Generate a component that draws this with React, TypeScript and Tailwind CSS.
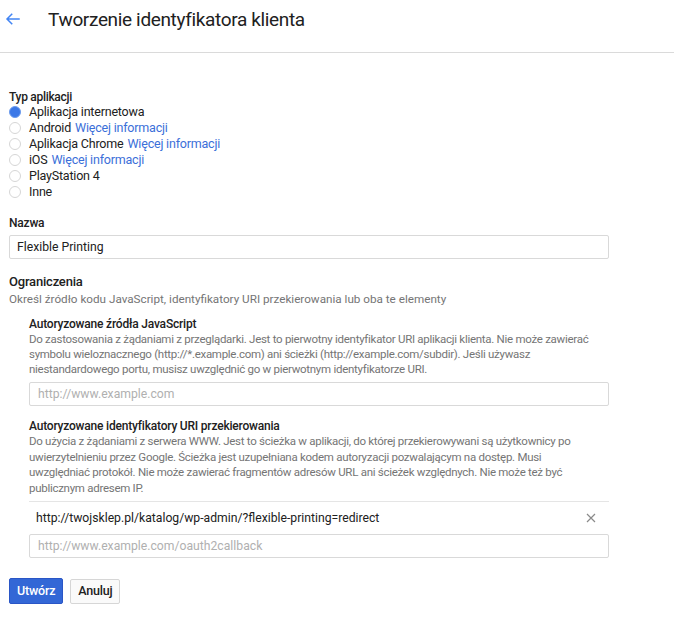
import React from 'react';

const radios = [
  { label: 'Aplikacja internetowa', more: false, checked: true },
  { label: 'Android', more: true },
  { label: 'Aplikacja Chrome', more: true },
  { label: 'iOS', more: true },
  { label: 'PlayStation 4', more: false },
  { label: 'Inne', more: false },
];

export default function App() {
  return (
    <div className="min-h-screen bg-white text-[#212121] font-['Roboto','Liberation_Sans',sans-serif]">
      {/* Header */}
      <div className="h-[53px] border-b border-[#dadada] flex items-center">
        <button className="w-[48px] h-[40px] flex items-center pl-[4px] -mt-[14px]">
          <svg width="18" height="18" viewBox="0 0 24 24" fill="none">
            <path d="M21 12H4M11 5l-7 7 7 7" stroke="#4285f4" strokeWidth="2" />
          </svg>
        </button>
        <h1 className="text-[19px] leading-[26px] tracking-[-0.35px] -mt-[13px] text-[#212121]">
          Tworzenie identyfikatora klienta
        </h1>
      </div>

      <div className="pl-[9px] pr-[65px]">
        {/* Typ aplikacji */}
        <div className="mt-[37px] text-[12px] leading-[14px] font-medium tracking-[-0.3px]">Typ aplikacji</div>
        <div className="flex flex-col">
          {radios.map((r) => (
            <label key={r.label} className="flex items-center h-[16px] text-[12.5px] tracking-[-0.2px]">
              {r.checked ? (
                <span className="w-[12px] h-[12px] rounded-full bg-[#3b78e7] border border-[#6d9ced] mr-[8px]" />
              ) : (
                <span className="w-[12px] h-[12px] rounded-full border border-[#d6d6d6] bg-white mr-[8px]" />
              )}
              <span>{r.label}</span>
              {r.more && <a className="ml-[4px] text-[#3b6fd9]">Więcej informacji</a>}
            </label>
          ))}
        </div>

        {/* Nazwa */}
        <div className="mt-[15px] text-[12px] leading-[16px] font-medium tracking-[-0.2px]">Nazwa</div>
        <div className="mt-[4px] h-[24px] border border-[#d9d9d9] rounded-[2px] flex items-center px-[7px] text-[12.2px]">
          Flexible Printing
        </div>

        {/* Ograniczenia */}
        <div className="mt-[14px] text-[13px] leading-[18px] font-medium tracking-[-0.2px]">Ograniczenia</div>
        <div className="text-[11.7px] leading-[16px] text-[#757575]">
          Określ źródło kodu JavaScript, identyfikatory URI przekierowania lub oba te elementy
        </div>

        <div className="pl-[20px]">
          <div className="mt-[9px] text-[12px] leading-[16px] font-medium tracking-[-0.2px]">
            Autoryzowane źródła JavaScript
          </div>
          <p className="text-[11.5px] leading-[15px] tracking-[-0.28px] text-[#757575] pr-[9px]">
            Do zastosowania z żądaniami z przeglądarki. Jest to pierwotny identyfikator URI aplikacji klienta. Nie może zawierać symbolu wieloznacznego (http://*.example.com) ani ścieżki (http://example.com/subdir). Jeśli używasz niestandardowego portu, musisz uwzględnić go w pierwotnym identyfikatorze URI.
          </p>
          <div className="mt-[5px] h-[24px] border border-[#d9d9d9] rounded-[2px] flex items-center px-[8px] text-[12.2px] text-[#b0b0b0]">
            http://www.example.com
          </div>

          <div className="mt-[12px] text-[12px] leading-[16px] font-medium tracking-[-0.2px]">
            Autoryzowane identyfikatory URI przekierowania
          </div>
          <p className="text-[11.5px] leading-[15.5px] tracking-[-0.28px] text-[#757575] pr-[9px]">
            Do użycia z żądaniami z serwera WWW. Jest to ścieżka w aplikacji, do której przekierowywani są użytkownicy po uwierzytelnieniu przez Google. Ścieżka jest uzupełniana kodem autoryzacji pozwalającym na dostęp. Musi uwzględniać protokół. Nie może zawierać fragmentów adresów URL ani ścieżek względnych. Nie może też być publicznym adresem IP.
          </p>
          <div className="mt-[5px] border-t border-[#e5e5e5] h-[33px] flex items-center justify-between pl-[7px] pr-[13px] text-[12.2px]">
            <span>http://twojsklep.pl/katalog/wp-admin/?flexible-printing=redirect</span>
            <svg width="10" height="10" viewBox="0 0 10 10">
              <path d="M1 1l8 8M9 1l-8 8" stroke="#8a8a8a" strokeWidth="1.2" />
            </svg>
          </div>
          <div className="h-[24px] border border-[#d9d9d9] rounded-[2px] flex items-center px-[8px] text-[12.2px] text-[#b0b0b0]">
            http://www.example.com/oauth2callback
          </div>
        </div>

        {/* Buttons */}
        <div className="mt-[20px] flex items-center gap-[7px]">
          <button className="h-[26px] px-[7px] rounded-[2px] bg-[#3367d6] border border-[#2a56c6] text-white text-[12.5px] font-medium tracking-[-0.2px]">
            Utwórz
          </button>
          <button className="h-[25px] px-[7px] rounded-[2px] bg-[#fafafa] border border-[#d6d6d6] text-[#212121] text-[12.5px] font-medium tracking-[-0.2px]">
            Anuluj
          </button>
        </div>
      </div>
    </div>
  );
}
